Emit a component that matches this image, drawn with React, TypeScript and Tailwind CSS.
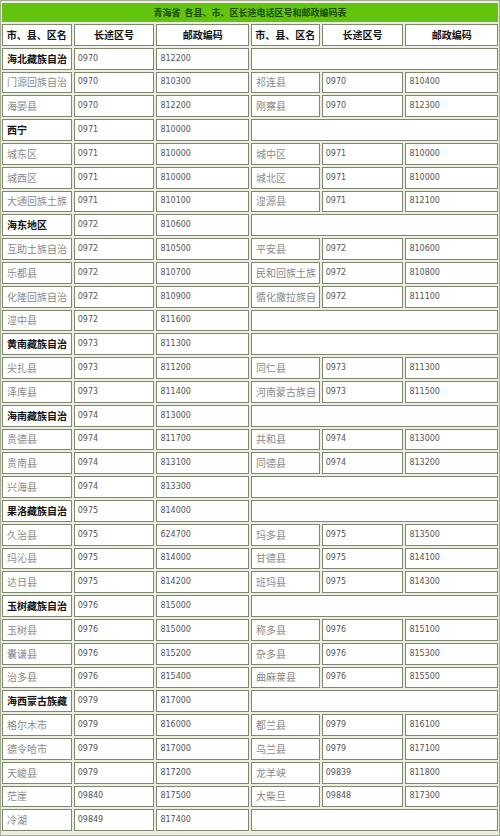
type Entry = [string, string, string];
type Row = { left: Entry; bold?: boolean; right?: Entry };

const rows: Row[] = [
  { left: ["海北藏族自治", "0970", "812200"], bold: true },
  { left: ["门源回族自治", "0970", "810300"], right: ["祁连县", "0970", "810400"] },
  { left: ["海晏县", "0970", "812200"], right: ["刚察县", "0970", "812300"] },
  { left: ["西宁", "0971", "810000"], bold: true },
  { left: ["城东区", "0971", "810000"], right: ["城中区", "0971", "810000"] },
  { left: ["城西区", "0971", "810000"], right: ["城北区", "0971", "810000"] },
  { left: ["大通回族土族", "0971", "810100"], right: ["湟源县", "0971", "812100"] },
  { left: ["海东地区", "0972", "810600"], bold: true },
  { left: ["互助土族自治", "0972", "810500"], right: ["平安县", "0972", "810600"] },
  { left: ["乐都县", "0972", "810700"], right: ["民和回族土族", "0972", "810800"] },
  { left: ["化隆回族自治", "0972", "810900"], right: ["循化撒拉族自", "0972", "811100"] },
  { left: ["湟中县", "0972", "811600"] },
  { left: ["黄南藏族自治", "0973", "811300"], bold: true },
  { left: ["尖扎县", "0973", "811200"], right: ["同仁县", "0973", "811300"] },
  { left: ["泽库县", "0973", "811400"], right: ["河南蒙古族自", "0973", "811500"] },
  { left: ["海南藏族自治", "0974", "813000"], bold: true },
  { left: ["贵德县", "0974", "811700"], right: ["共和县", "0974", "813000"] },
  { left: ["贵南县", "0974", "813100"], right: ["同德县", "0974", "813200"] },
  { left: ["兴海县", "0974", "813300"] },
  { left: ["果洛藏族自治", "0975", "814000"], bold: true },
  { left: ["久治县", "0975", "624700"], right: ["玛多县", "0975", "813500"] },
  { left: ["玛沁县", "0975", "814000"], right: ["甘德县", "0975", "814100"] },
  { left: ["达日县", "0975", "814200"], right: ["班玛县", "0975", "814300"] },
  { left: ["玉树藏族自治", "0976", "815000"], bold: true },
  { left: ["玉树县", "0976", "815000"], right: ["称多县", "0976", "815100"] },
  { left: ["囊谦县", "0976", "815200"], right: ["杂多县", "0976", "815300"] },
  { left: ["治多县", "0976", "815400"], right: ["曲麻莱县", "0976", "815500"] },
  { left: ["海西蒙古族藏", "0979", "817000"], bold: true },
  { left: ["格尔木市", "0979", "816000"], right: ["都兰县", "0979", "816100"] },
  { left: ["德令哈市", "0979", "817000"], right: ["乌兰县", "0979", "817100"] },
  { left: ["天峻县", "0979", "817200"], right: ["龙羊峡", "09839", "811800"] },
  { left: ["茫崖", "09840", "817500"], right: ["大柴旦", "09848", "817300"] },
  { left: ["冷湖", "09849", "817400"] },
];

const cell =
  "h-[21.8px] bg-white border border-[#7c896c] flex items-center overflow-hidden whitespace-nowrap";
const cjk = "font-['Noto_Sans_CJK_SC','Noto_Sans',sans-serif]";
const num = "font-['DejaVu_Sans',sans-serif] text-[8px] text-[#555555] pl-[3px]";

function NameCell({ name, bold }: { name: string; bold?: boolean }) {
  return (
    <div
      className={`${cell} ${cjk} pl-[4px] text-[10px] leading-none ${
        bold ? "font-bold text-[#111111]" : "text-[#8a8a8a]"
      }`}
    >
      {name}
    </div>
  );
}

function Entries({ e, bold }: { e: Entry; bold?: boolean }) {
  return (
    <>
      <NameCell name={e[0]} bold={bold} />
      <div className={`${cell} ${num}`}>{e[1]}</div>
      <div className={`${cell} ${num}`}>{e[2]}</div>
    </>
  );
}

function HeaderCells() {
  return (
    <>
      {["市、县、区名", "长途区号", "邮政编码"].map((t) => (
        <div
          key={t}
          className={`${cell} ${cjk} justify-center text-[10px] font-bold text-[#111111] leading-none`}
        >
          {t}
        </div>
      ))}
    </>
  );
}

export default function App() {
  return (
    <div className="w-[500px] h-[836px] bg-[#eceee4] border border-[#a3ab94] px-px pt-[2px] overflow-hidden">
      <div className="grid grid-cols-[70fr_81fr_93fr_69fr_82fr_93fr] gap-[2px]">
        <div
          className={`col-span-6 h-[19px] bg-[#63c40f] flex items-center justify-center ${cjk} text-[9px] font-bold text-[#1b4a00] leading-none`}
        >
          青海省&nbsp;&nbsp;各县、市、区长途电话区号和邮政编码表
        </div>
        <HeaderCells />
        <HeaderCells />
        {rows.map((r, i) => (
          <div key={i} className="contents">
            <Entries e={r.left} bold={r.bold} />
            {r.right ? (
              <Entries e={r.right} />
            ) : (
              <div className={`${cell} col-span-3`} />
            )}
          </div>
        ))}
      </div>
    </div>
  );
}
